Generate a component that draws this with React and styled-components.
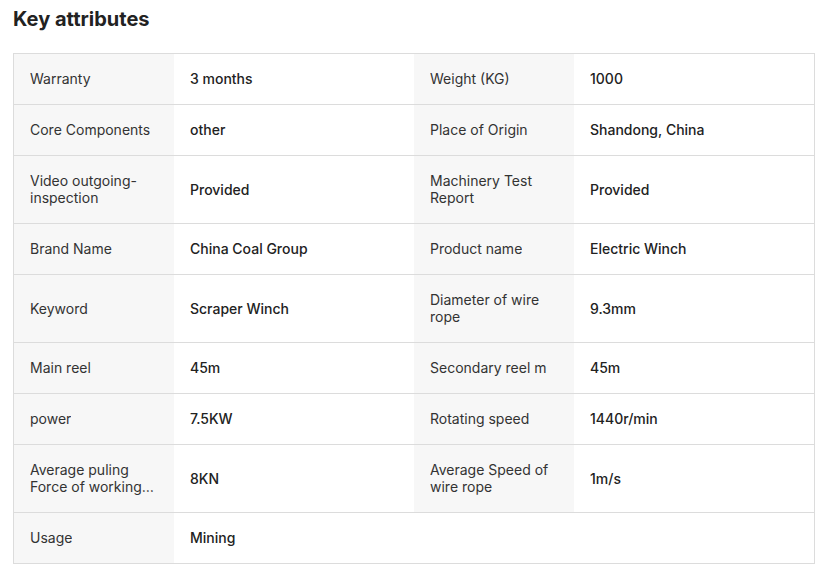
import React from "react";
import styled, { createGlobalStyle } from "styled-components";

const Global = createGlobalStyle`
  html, body { margin: 0; padding: 0; background: #fff; }
  body { font-family: Inter, "Noto Sans", sans-serif; -webkit-font-smoothing: antialiased; }
`;

const Page = styled.div`
  padding: 5px 12px 0 13px;
`;

const Title = styled.h2`
  margin: 0 0 20px;
  font-size: 20px;
  line-height: 28px;
  font-weight: 700;
  color: #222;
`;

const Table = styled.div`
  width: 800px;
  border: 1px solid #dcdcdc;
`;

const Row = styled.div`
  display: grid;
  grid-template-columns: 160px 240px 160px 240px;
  border-bottom: 1px solid #dcdcdc;
  &:last-child { border-bottom: none; }
`;

const Cell = styled.div`
  display: flex;
  align-items: center;
  padding: 16px 16px 17px;
  font-size: 14px;
  line-height: 17px;
  background: ${(p) => (p.$label ? "#f7f7f7" : "#fff")};
  color: ${(p) => (p.$label ? "#333" : "#222")};
  font-weight: ${(p) => (p.$label ? 400 : 500)};
`;

const Clamp = styled.span`
  display: -webkit-box;
  -webkit-line-clamp: 2;
  -webkit-box-orient: vertical;
  overflow: hidden;
`;

const rows = [
  ["Warranty", "3 months", "Weight (KG)", "1000"],
  ["Core Components", "other", "Place of Origin", "Shandong, China"],
  ["Video outgoing-inspection", "Provided", "Machinery Test Report", "Provided"],
  ["Brand Name", "China Coal Group", "Product name", "Electric Winch"],
  ["Keyword", "Scraper Winch", "Diameter of wire rope", "9.3mm"],
  ["Main reel", "45m", "Secondary reel m", "45m"],
  ["power", "7.5KW", "Rotating speed", "1440r/min"],
  ["Average puling Force of working condition", "8KN", "Average Speed of wire rope", "1m/s"],
  ["Usage", "Mining", null, null],
];

export default function App() {
  return (
    <Page>
      <Global />
      <Title>Key attributes</Title>
      <Table>
        {rows.map((r, i) => (
          <Row key={i}>
            <Cell $label><Clamp>{r[0]}</Clamp></Cell>
            <Cell>{r[1]}</Cell>
            {r[2] !== null ? (
              <>
                <Cell $label><Clamp>{r[2]}</Clamp></Cell>
                <Cell>{r[3]}</Cell>
              </>
            ) : (
              <>
                <Cell />
                <Cell />
              </>
            )}
          </Row>
        ))}
      </Table>
    </Page>
  );
}
